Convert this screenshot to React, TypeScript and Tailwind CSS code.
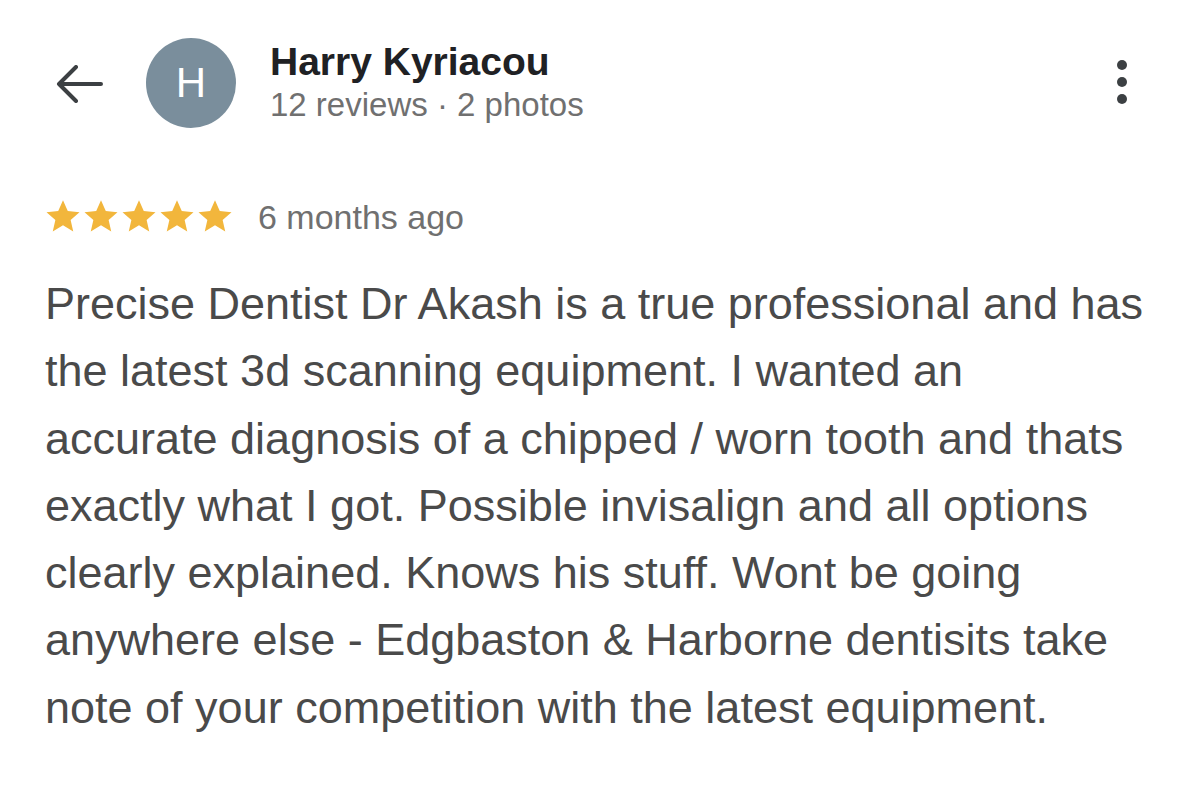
import React from "react";

const Star = () => (
  <svg width="38" height="37" viewBox="0 0 24 24" className="block">
    <path
      d="M12 1.5l3.1 7 7.6.7-5.75 5.03 1.7 7.45L12 17.75 5.35 21.68l1.7-7.45L1.3 9.2l7.6-.7z"
      fill="#F2B63C"
    />
  </svg>
);

const lines = [
  "Precise Dentist Dr Akash is a true professional and has",
  "the latest 3d scanning equipment. I wanted an",
  "accurate diagnosis of a chipped / worn tooth and thats",
  "exactly what I got. Possible invisalign and all options",
  "clearly explained. Knows his stuff. Wont be going",
  "anywhere else - Edgbaston & Harborne dentisits take",
  "note of your competition with the latest equipment.",
];

export default function App() {
  return (
    <div
      className="w-[1200px] h-[785px] bg-white overflow-hidden"
      style={{ fontFamily: '"Liberation Sans", Arial, sans-serif' }}
    >
      <div className="flex items-start pt-[38px] pl-[55px] pr-[73px]">
        <div className="mt-[28px] w-[48px] h-[36px] flex items-center">
          <svg width="48" height="38" viewBox="0 0 48 38" fill="none">
            <path
              d="M46 19H4M21 2L4 19l17 17"
              stroke="#3c4043"
              strokeWidth="4"
              strokeLinecap="round"
              strokeLinejoin="round"
            />
          </svg>
        </div>
        <div className="ml-[43px] w-[90px] h-[90px] rounded-full bg-[#7a8e9c] flex items-center justify-center text-white text-[42px] leading-none">
          H
        </div>
        <div className="ml-[34px] flex flex-col">
          <div className="text-[39px] font-bold text-[#202124] leading-[44px] mt-[2px]">
            Harry Kyriacou
          </div>
          <div className="text-[33px] text-[#707070] leading-[40px] mt-[1px]">
            12 reviews · 2 photos
          </div>
        </div>
        <div className="ml-auto mt-[22px] flex flex-col items-center gap-[7px]">
          <div className="w-[10px] h-[10px] rounded-full bg-[#3c4043]" />
          <div className="w-[10px] h-[10px] rounded-full bg-[#3c4043]" />
          <div className="w-[10px] h-[10px] rounded-full bg-[#3c4043]" />
        </div>
      </div>

      <div className="flex items-center pl-[44px] mt-[70px]">
        <div className="flex">
          <Star />
          <Star />
          <Star />
          <Star />
          <Star />
        </div>
        <span className="ml-[24px] text-[34px] text-[#707070] leading-none">
          6 months ago
        </span>
      </div>

      <div className="pl-[45px] mt-[35px] text-[45px] text-[#4a4a4a] leading-[67.3px]">
        {lines.map((l, i) => (
          <div key={i} className="whitespace-nowrap">
            {l}
          </div>
        ))}
      </div>
    </div>
  );
}
